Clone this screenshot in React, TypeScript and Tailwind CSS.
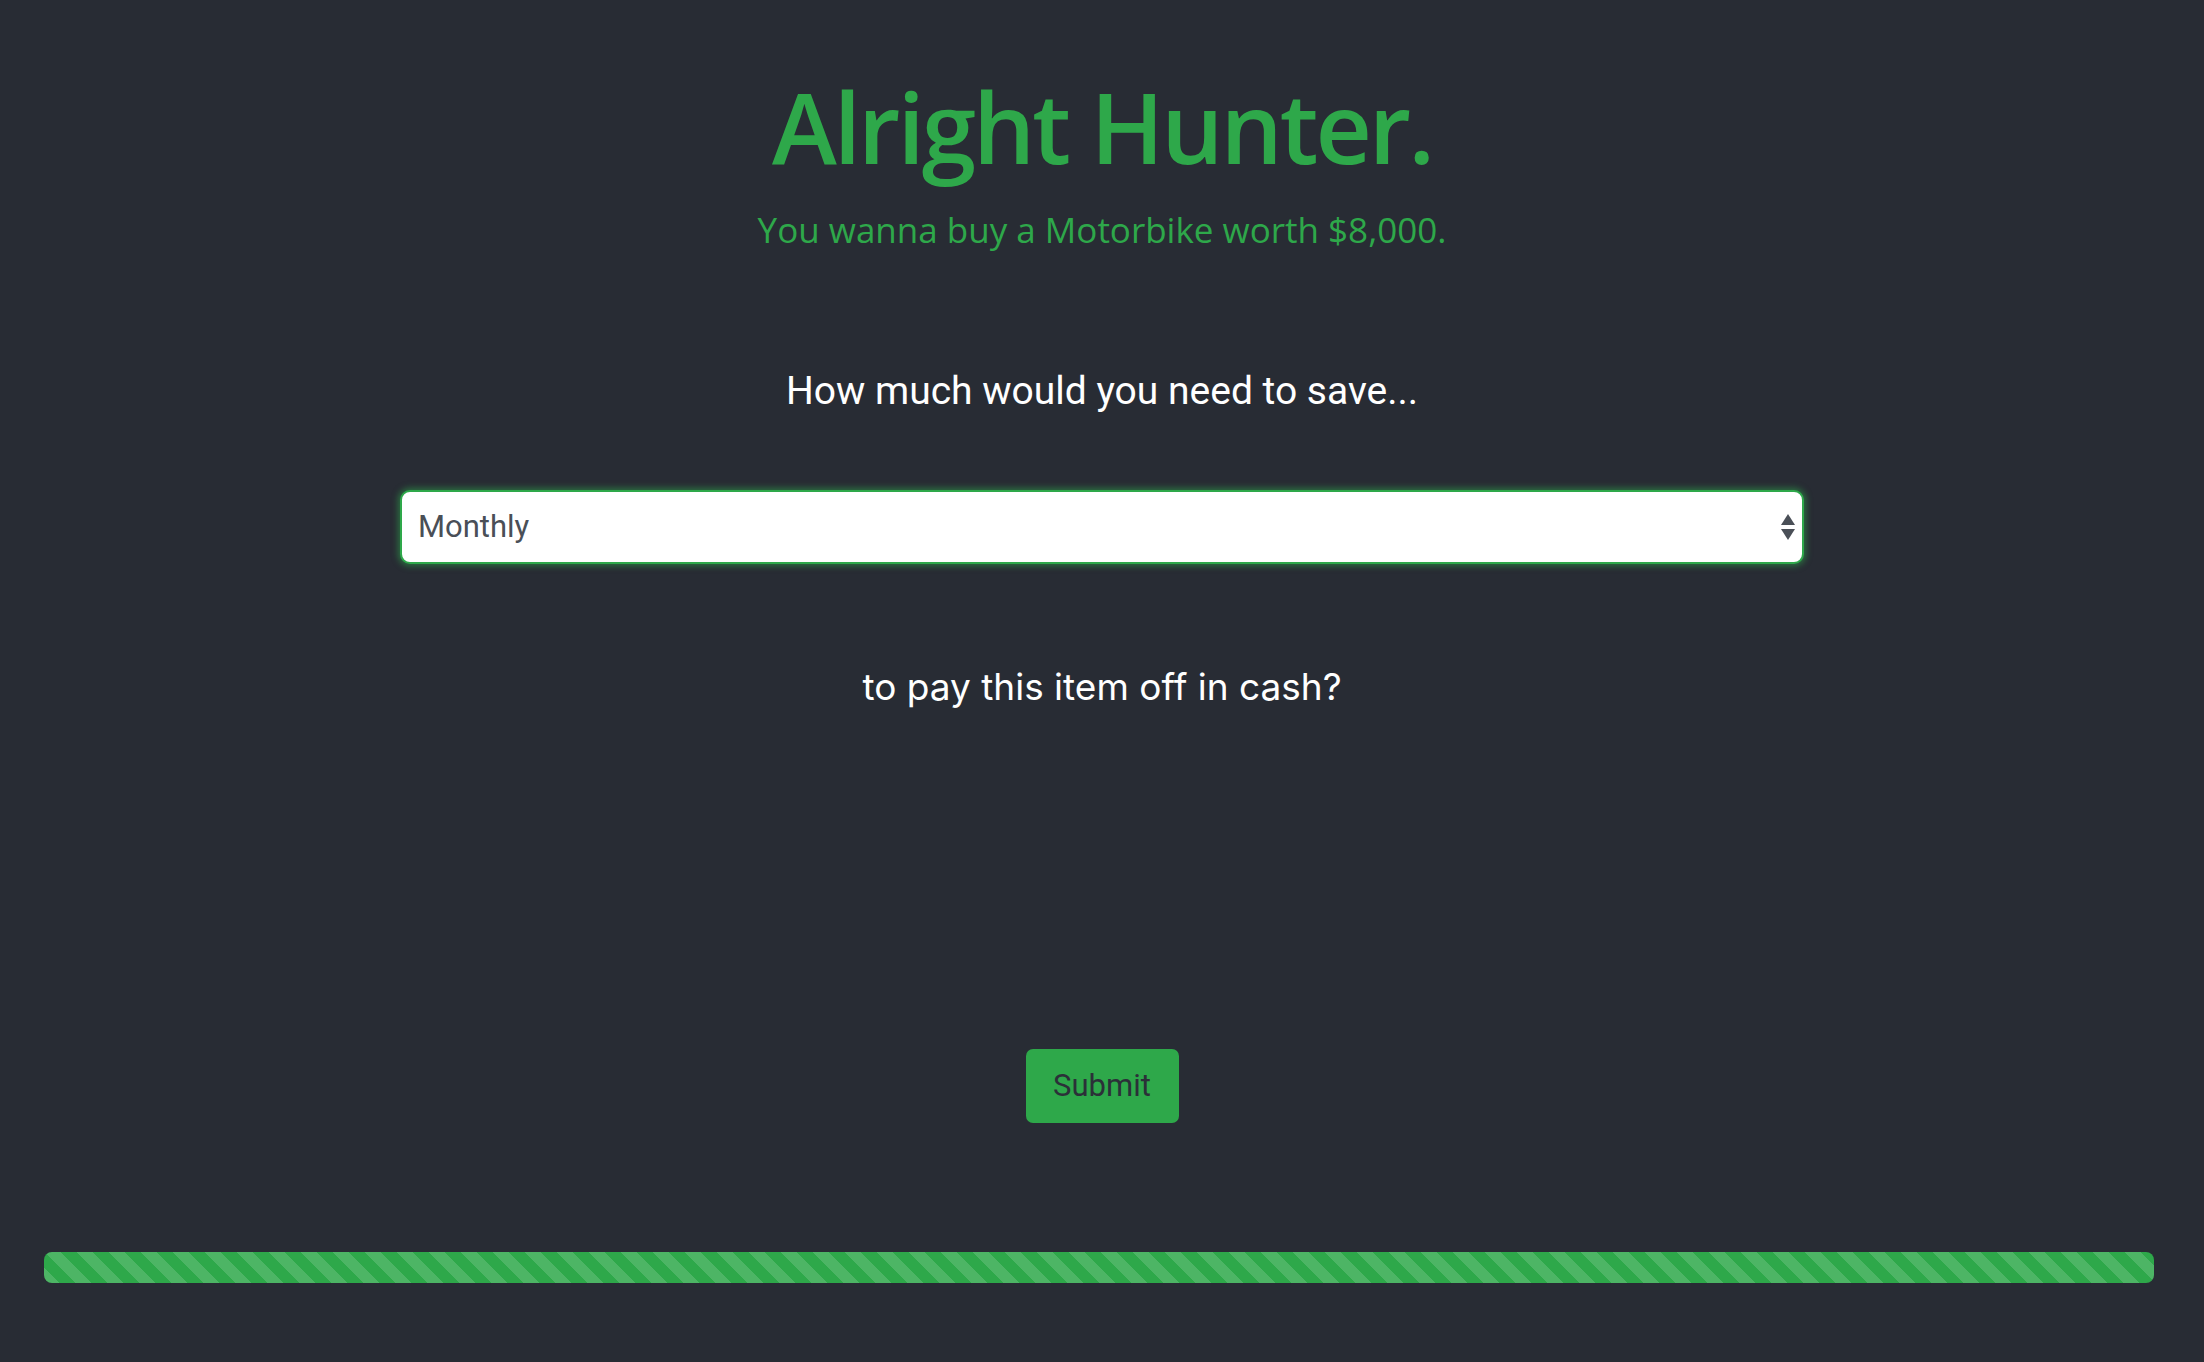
import { useState } from "react";

const STRIPES =
  "bg-[linear-gradient(45deg,rgba(255,255,255,0.15)_25%,transparent_25%,transparent_50%,rgba(255,255,255,0.15)_50%,rgba(255,255,255,0.15)_75%,transparent_75%,transparent)] bg-[length:32px_32px]";

function SelectArrows() {
  return (
    <svg width="16" height="28" viewBox="0 0 16 28" className="pointer-events-none absolute right-[8px] top-1/2 -translate-y-1/2">
      <path d="M8 1 L15 12 L1 12 Z" fill="#4a4f57" />
      <path d="M8 27 L15 16 L1 16 Z" fill="#4a4f57" />
    </svg>
  );
}

export default function App() {
  const [period, setPeriod] = useState("monthly");

  return (
    <div className="min-h-[1362px] w-full bg-[#282c34] font-['Roboto',sans-serif]">
      <div className="flex flex-col items-center pt-[77px]">
        <h1 className="font-['Open_Sans',sans-serif] text-[98px] leading-none font-semibold tracking-[-3px] text-[#2ea84a]">
          Alright Hunter.
        </h1>
        <p className="mt-[37px] font-['Open_Sans',sans-serif] text-[35px] leading-none text-[#2ea84a]">
          You wanna buy a Motorbike worth $8,000.
        </p>

        <p className="mt-[125px] text-[39px] leading-none text-white">How much would you need to save...</p>

        <div className="relative mt-[79px] w-[1404px]">
          <select
            value={period}
            onChange={(e) => setPeriod(e.target.value)}
            className="h-[74px] w-full appearance-none rounded-[10px] border-2 border-[#2ea84a] bg-white pl-[16px] text-[31px] text-[#4a4f57] shadow-[0_0_6px_2px_rgba(46,168,74,0.55)] outline-none"
          >
            <option value="weekly">Weekly</option>
            <option value="monthly">Monthly</option>
            <option value="yearly">Yearly</option>
          </select>
          <SelectArrows />
        </div>

        <p className="mt-[104px] font-['Inter',sans-serif] text-[37px] leading-none text-white">
          to pay this item off in cash?
        </p>

        <button className="mt-[344px] h-[74px] w-[153px] rounded-[7px] bg-[#2ea84a] text-[31px] text-[#2b3038]">
          Submit
        </button>
      </div>

      <div className="ml-[44px] mr-[50px] mt-[129px] h-[31px] overflow-hidden rounded-[8px] bg-[#2ea84a]">
        <div className={`h-full w-full ${STRIPES}`} />
      </div>
    </div>
  );
}
